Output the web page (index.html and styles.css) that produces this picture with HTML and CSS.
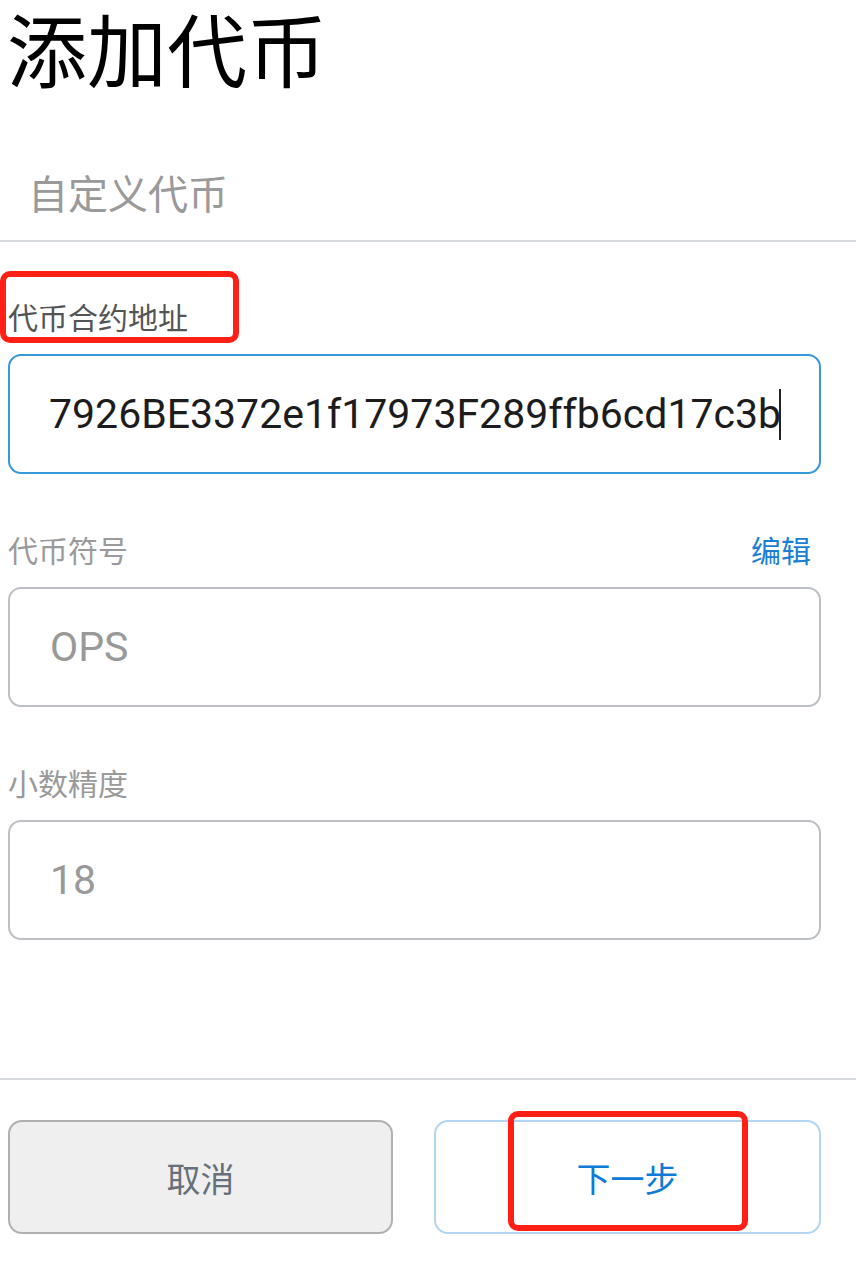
FILE: index.html
```html
<!DOCTYPE html>
<html lang="zh-CN">
<head>
<meta charset="utf-8">
<title>添加代币</title>
<link rel="stylesheet" href="styles.css">
</head>
<body>
<div class="page">
  <h1 class="title">添加代币</h1>
  <div class="tabs"><span class="tab">自定义代币</span></div>
  <form class="form">
    <div class="field">
      <div class="label-row">
        <label class="label label-dark">代币合约地址</label>
        <span class="mark mark-label"></span>
      </div>
      <div class="input input-focus"><span class="value value-dark">7926BE3372e1f17973F289ffb6cd17c3b</span><span class="caret"></span></div>
    </div>
    <div class="field">
      <div class="label-row">
        <label class="label">代币符号</label>
        <a class="edit">编辑</a>
      </div>
      <div class="input"><span class="value">OPS</span></div>
    </div>
    <div class="field">
      <div class="label-row">
        <label class="label">小数精度</label>
      </div>
      <div class="input"><span class="value">18</span></div>
    </div>
  </form>
  <div class="footer">
    <div class="buttons">
      <button class="btn btn-cancel" type="button">取消</button>
      <div class="next-wrap">
        <button class="btn btn-next" type="button">下一步</button>
        <span class="mark mark-next"></span>
      </div>
    </div>
  </div>
</div>
</body>
</html>
```
FILE: styles.css
```css
* { box-sizing: border-box; }
html, body {
  margin: 0;
  padding: 0;
  background: #fff;
}
body {
  font-family: Roboto, "Noto Sans CJK SC", "Noto Sans", sans-serif;
  width: 856px;
  height: 1263px;
  overflow: hidden;
}
.page {
  display: flex;
  flex-direction: column;
}
.title {
  margin: -12px 0 -4px 0;
  padding-left: 7px;
  font-family: "Noto Sans CJK SC", sans-serif;
  font-weight: 400;
  font-size: 80px;
  line-height: 116px;
  color: #000;
}
.tabs {
  padding: 72px 0 28px 28px;
  border-bottom: 2px solid #d5d8dc;
}
.tab {
  display: block;
  font-family: "Noto Sans CJK SC", sans-serif;
  font-size: 40px;
  line-height: 40px;
  color: #9a9a9a;
}
.form {
  display: flex;
  flex-direction: column;
  gap: 60px;
  padding: 59px 35px 0 8px;
}
.field {
  display: flex;
  flex-direction: column;
  gap: 23px;
}
.label-row {
  position: relative;
  display: flex;
  justify-content: space-between;
  align-items: center;
  height: 30px;
}
.label {
  font-family: "Noto Sans CJK SC", sans-serif;
  font-size: 30px;
  line-height: 30px;
  color: #9a9a9a;
}
.label-dark { color: #555; }
.edit {
  font-family: "Noto Sans CJK SC", sans-serif;
  font-size: 30px;
  line-height: 30px;
  color: #1a7fd4;
  margin-right: 10px;
}
.input {
  display: flex;
  align-items: center;
  height: 120px;
  padding-left: 40px;
  border: 2px solid #bcc0c4;
  border-radius: 13px;
}
.input-focus {
  border-color: #3498db;
  padding-left: 39px;
}
.value {
  font-family: Roboto, sans-serif;
  font-size: 41px;
  color: #999;
  white-space: nowrap;
}
.value-dark { color: #1c1c1c; }
.caret {
  width: 2px;
  height: 51px;
  background: #222;
  margin-left: -2px;
}
.mark {
  position: absolute;
  border: 6px solid #ff1f14;
  border-radius: 10px;
  pointer-events: none;
}
.mark-label {
  left: -8px;
  top: -30px;
  width: 239px;
  height: 72px;
}
.footer {
  margin-top: 138px;
  border-top: 2px solid #d5d8dc;
  padding: 40px 35px 0 8px;
}
.buttons {
  display: grid;
  grid-template-columns: 385px 387px;
  gap: 41px;
}
.btn {
  height: 114px;
  border-radius: 14px;
  font-family: "Noto Sans CJK SC", sans-serif;
  font-size: 34px;
  cursor: pointer;
}
.btn-cancel {
  background: #efefef;
  border: 2px solid #b0b0b0;
  color: #66707a;
}
.next-wrap {
  position: relative;
  display: flex;
}
.btn-next {
  flex: 1;
  background: #fff;
  border: 2px solid #b3d6f0;
  color: #0f7bd6;
}
.mark-next {
  left: 74px;
  top: -9px;
  width: 240px;
  height: 120px;
}
```
